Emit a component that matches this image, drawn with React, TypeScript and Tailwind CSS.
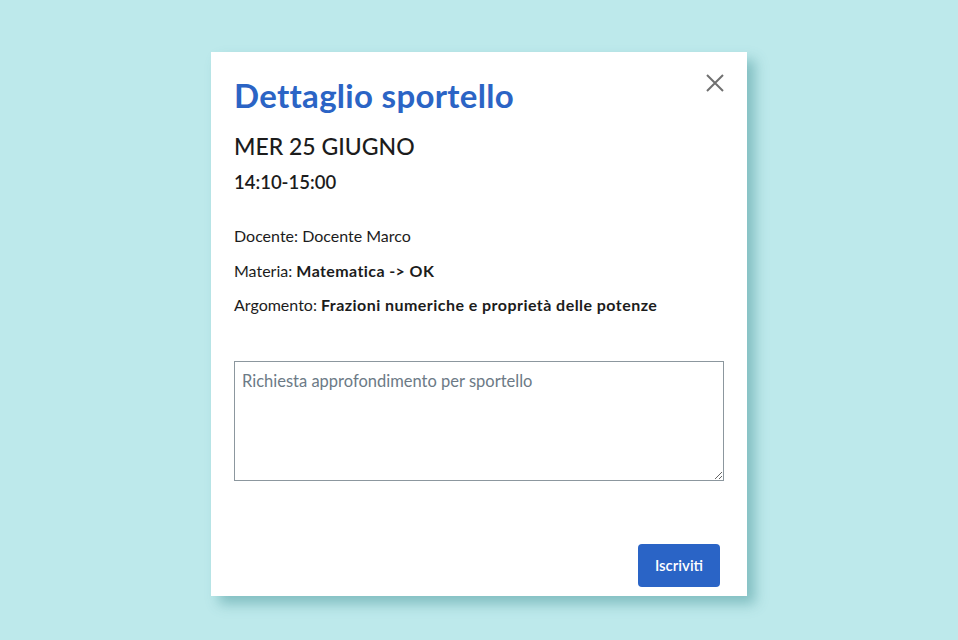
import { useState } from "react";

const font = { fontFamily: "Lato, 'Open Sans', sans-serif" };

export default function App() {
  const [note, setNote] = useState("");

  return (
    <div
      className="w-full h-[640px] bg-[#bde9eb] flex items-start justify-center pt-[52px]"
      style={font}
    >
      <div className="relative w-[536px] h-[544px] bg-white shadow-[8px_8px_12px_rgba(60,140,145,0.45)] px-[23px] pt-[23px] flex flex-col">
        <button
          type="button"
          aria-label="Chiudi"
          className="absolute right-[20px] top-[19px] w-[24px] h-[24px] flex items-center justify-center text-[#707070]"
        >
          <svg width="20" height="20" viewBox="0 0 20 20" fill="none">
            <path d="M2 2L18 18M18 2L2 18" stroke="currentColor" strokeWidth="2" />
          </svg>
        </button>

        <h2 className="text-[33px] leading-[40px] font-bold text-[#2b64c5] tracking-[0.3px]">
          Dettaglio sportello
        </h2>
        <div className="mt-[16px] text-[23px] leading-[30px] font-medium text-[#1c1c1c]">
          MER 25 GIUGNO
        </div>
        <div className="mt-[8px] text-[18.5px] leading-[26px] font-semibold text-[#1c1c1c]">
          14:10-15:00
        </div>

        <div className="mt-[29px] flex flex-col gap-[10px] text-[16px] leading-[24.5px] text-[#1c1c1c]">
          <p>Docente: Docente Marco</p>
          <p>
            Materia: <b className="font-bold tracking-[0.4px]">Matematica -&gt; OK</b>
          </p>
          <p>
            Argomento:{" "}
            <b className="font-bold tracking-[0.45px]">Frazioni numeriche e proprietà delle potenze</b>
          </p>
        </div>

        <textarea
          value={note}
          onChange={(e) => setNote(e.target.value)}
          placeholder="Richiesta approfondimento per sportello"
          className="mt-[43px] w-[490px] h-[120px] border border-[#8c979e] px-[7px] py-[7px] text-[16.5px] leading-[24px] text-[#1c1c1c] placeholder:text-[#6c7a86] outline-none"
        />

        <div className="mt-auto mb-[9px] flex justify-end pr-[4px]">
          <button
            type="button"
            className="w-[82px] h-[43px] rounded-[4px] bg-[#2a64c6] text-white text-[15px] font-semibold"
          >
            Iscriviti
          </button>
        </div>
      </div>
    </div>
  );
}
